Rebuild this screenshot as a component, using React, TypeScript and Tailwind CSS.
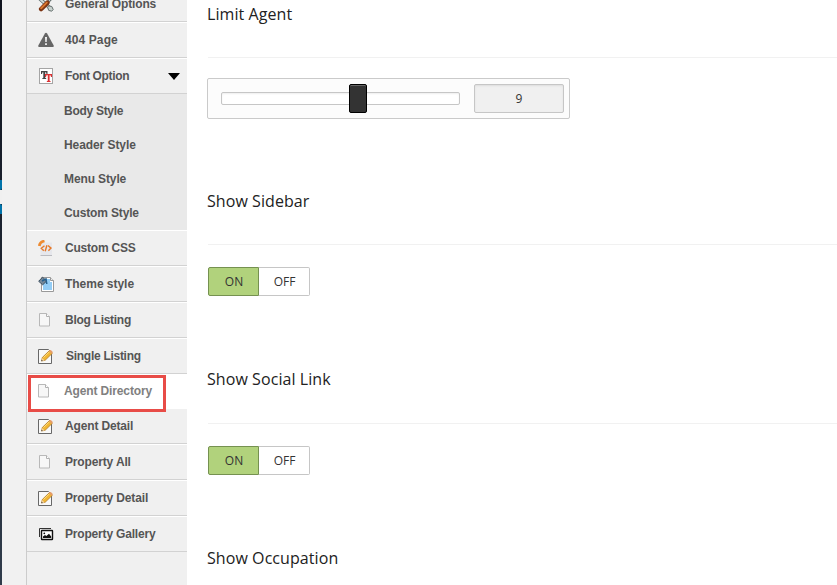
import type { ReactNode } from "react";

const Tools = () => (
  <svg width="16" height="16" viewBox="0 0 16 16" fill="none">
    <path d="M2.500 3.500l10 9" stroke="#647273" strokeWidth="3.600" strokeLinecap="round" />
    <path d="M2.500 3.500l10 9" stroke="#d4dcd9" strokeWidth="1.800" strokeLinecap="round" />
    <path d="M10.500 9.800l3.300.7 1.400 3-1.500 1.700-3-.8-1-3z" fill="#c9d2ce" stroke="#66706f" />
    <path d="M14.500 1.500L9.500 6.500" stroke="#66706f" strokeWidth="2.600" />
    <path d="M14.500 1.500L9.500 6.500" stroke="#bcc6c3" strokeWidth="1" />
    <path d="M9.300 6.800L3.200 13" stroke="#7c3312" strokeWidth="4.600" strokeLinecap="round" />
    <path d="M8.800 6.600L3.200 12.200" stroke="#d9762f" strokeWidth="2" strokeLinecap="round" />
  </svg>
);

const Warning = () => (
  <svg width="16" height="16" viewBox="0 0 16 16">
    <path d="M8 .8Q8.700.8 9.100 1.500L15.700 13.600Q16.100 15 14.900 15H1.100Q-.1 15 .3 13.600L6.900 1.500Q7.300.8 8 .8z" fill="#666" />
    <path d="M7 5h2l-.3 5H7.300zM7.100 11.200h1.800V13H7.100z" fill="#f3f3f3" />
  </svg>
);

const FontIcon = () => (
  <svg width="16" height="16" viewBox="0 0 16 16">
    <rect x="1.500" y=".5" width="13" height="15" fill="#fff" stroke="#a5a5a5" />
    <path d="M3 3h6.500v3h-1L8 4.200H7.200v5.600l1 .4V11H4.300v-.8l1-.4V4.200H4.500L4 6H3z" fill="#454545" />
    <path d="M7 6h7v3h-1l-.5-1.800h-.9v5.600l1 .4v.8H8.800v-.8l1-.4V7.200H8.500L8 9H7z" fill="#db2f32" />
  </svg>
);

const CssIcon = () => (
  <svg width="16" height="16" viewBox="0 0 16 16" fill="none">
    <path d="M4 2.500h10v13H2.500V7z" fill="#e6e7ec" />
    <path d="M2.500 15.500H14" stroke="#babbc0" />
    <path d="M1.300 6Q1.800 2 6.500 1" stroke="#ed8b32" strokeWidth="2.800" />
    <path d="M6.500 5.800L3.300 8.300l2.500 2.400M10 5.500l3 2.600-2.600 2.700M8.900 5.200L7.200 11.200" stroke="#e77928" strokeWidth="1.400" />
  </svg>
);

const ThemeIcon = () => (
  <svg width="16" height="16" viewBox="0 0 16 16" fill="none">
    <path d="M3.500 1.500h9l3 3v11h-12z" fill="#fff" stroke="#999" />
    <path d="M5 3h7v3h2v8H5z" fill="#93cdf6" />
    <path d="M12.500 1.500v3h3" fill="#eee" stroke="#999" />
    <path d="M4.500 1.200l4.200 3.700-4 3.900L.7 5.300z" fill="#76899a" stroke="#3d5060" />
    <path d="M4 5l4-2 .8 5" stroke="#28618d" strokeWidth="1.500" />
  </svg>
);

const Page = () => (
  <svg width="16" height="16" viewBox="0 0 16 16" fill="none">
    <path d="M1.500 1.500h7l3 3v9.500h-10z" fill="#f7f7f7" stroke="#b8b8b8" />
    <path d="M8.500 1.500v3h3" fill="#fff" stroke="#b0b0b0" />
  </svg>
);

const Edit = () => (
  <svg width="16" height="16" viewBox="0 0 16 16" fill="none">
    <path d="M.5 1.500h10l3 3v11H.5z" fill="#f9f9f9" stroke="#686868" />
    <path d="M3.500 13l.8-3.500 7.200-7 2.800 2.800-7.200 7z" fill="#f1b634" stroke="#b47b25" strokeWidth=".8" />
    <path d="M5.500 9.500l6-5.800" stroke="#ffe083" />
    <path d="M10.800 3.100l1-1q.8-.5 1.600.3l1 1q.7.800.1 1.500l-.9.900z" fill="#e49c68" />
    <path d="M3.300 13.200l.8-3.200 2.500 2.400z" fill="#f3d3a0" />
    <path d="M3.300 13.200l.4-1.500 1.100 1.100z" fill="#333" />
  </svg>
);

const Gallery = () => (
  <svg width="16" height="16" viewBox="0 0 16 16" fill="none">
    <path d="M1.500 11V2.500H13" stroke="#333" />
    <rect x="3.500" y="4.500" width="11" height="9" rx=".5" fill="#fff" stroke="#111" strokeWidth="1.400" />
    <path d="M5 12V10.500l2-1.500 1.300 1L11 7.800l2.200 2.700V12z" fill="#111" />
    <circle cx="6.300" cy="7.300" r=".9" fill="#111" />
  </svg>
);

type RowProps = { icon: ReactNode; label: string; textClass?: string; className?: string; open?: boolean };

function Row({ icon, label, textClass = "tracking-[-0.15px]", className = "h-9 border-t border-t-white", open = false }: RowProps) {
  return (
    <li className={`flex shrink-0 items-center border-b border-b-[#d2d2d2] bg-[#f0f0f0] pl-[11px] ${className}`}>
      <span className="w-[27px]">{icon}</span>
      <span className={`leading-4 ${textClass}`}>{label}</span>
      {open && (
        <svg className="mr-[7px] ml-auto" width="12" height="7" viewBox="0 0 12 7">
          <path d="M0 0h12L6 7z" fill="#000" />
        </svg>
      )}
    </li>
  );
}

function Heading({ children, className = "" }: { children: string; className?: string }) {
  return <h3 className={`h-6 text-[16px] leading-6 tracking-[0.07px] whitespace-nowrap text-[#222] ${className}`}>{children}</h3>;
}

function Toggle() {
  return (
    <div className="ml-px flex h-[29px] w-[102px] text-[12px] leading-[27px] text-[#333]">
      <button className="w-[51px] rounded-l-[2px] border border-[#759150] bg-[#b1d27c] pl-px">ON</button>
      <button className="w-[51px] rounded-r-[2px] border border-l-0 border-[#c6c6c6] bg-white pl-px">OFF</button>
    </div>
  );
}

export default function App() {
  return (
    <div className="flex h-[585px] w-[837px] overflow-hidden bg-white font-['Liberation_Sans',Arial,sans-serif]">
      <div className="flex w-[2px] shrink-0 flex-col bg-linear-to-b from-[#10141f] to-[#303c4b]">
        <div className="mt-[180px] h-[10px] rounded-br-[2px] bg-[#0073aa]" />
        <div className="h-[14px] bg-[#f0f0f0]" />
        <div className="h-[10px] rounded-tr-[2px] bg-[#0073aa]" />
      </div>
      <div className="w-6 shrink-0 bg-[#f1f1f1]" />
      <aside className="relative w-[161px] shrink-0 border-l border-l-[#cccccc] bg-[#f0f0f0] text-[12px] font-bold text-[#555]">
        <ul className="-mt-[14px] flex flex-col">
          <Row icon={<Tools />} label="General Options" />
          <Row icon={<Warning />} label="404 Page" textClass="tracking-[0.1px]" />
          <Row icon={<FontIcon />} label="Font Option" textClass="tracking-[-0.35px]" open />
          <li className="bg-[#e9e9e9]">
            <ul>
              <li className="h-[34px] pl-[37px] leading-[34px] tracking-[-0.28px]">Body Style</li>
              <li className="h-[34px] pl-[37px] leading-[34px] tracking-[-0.08px]">Header Style</li>
              <li className="h-[34px] pl-[37px] leading-[34px] tracking-[-0.12px]">Menu Style</li>
              <li className="h-[34px] pl-[37px] leading-[34px] tracking-[-0.15px]">Custom Style</li>
            </ul>
          </li>
          <Row icon={<CssIcon />} label="Custom CSS" textClass="tracking-[-0.2px]" />
          <Row icon={<ThemeIcon />} label="Theme style" textClass="tracking-[-0.03px]" />
          <Row icon={<Page />} label="Blog Listing" textClass="tracking-[-0.28px]" />
          <Row icon={<Edit />} label="Single Listing" textClass="pl-px tracking-[-0.28px]" />
          <li className="flex h-[35px] items-center bg-white pb-0.5 pl-[10px] text-[#808080]">
            <span className="w-[27px]"><Page /></span>
            <span className="leading-4 tracking-[-0.13px]">Agent Directory</span>
          </li>
          <Row icon={<Edit />} label="Agent Detail" className="h-[35px]" />
          <Row icon={<Page />} label="Property All" />
          <Row icon={<Edit />} label="Property Detail" />
          <Row icon={<Gallery />} label="Property Gallery" textClass="tracking-[-0.18px]" />
        </ul>
        <div className="absolute top-[375px] left-px h-[37px] w-[138px] border-3 border-[#e84c47]" />
      </aside>
      <main className="flex flex-1 flex-col pl-5 font-['Open_Sans','Noto_Sans',sans-serif]">
        <section className="h-[189px] pt-0.5">
          <Heading>Limit Agent</Heading>
          <hr className="mt-[31px] ml-px border-[#f1f1f1]" />
          <div className="mt-5 flex h-[41px] w-[363px] items-center rounded-[2px] border border-[#cacaca] bg-[#fcfcfc] pl-[13px]">
            <div className="flex h-[13px] w-[239px] items-center rounded-[2px] border border-[#c6c6c6] bg-white pl-[127px] shadow-[inset_0_1px_2px_#eeeeee]">
              <div className="h-[29px] w-[18px] shrink-0 rounded-[2px] border border-black bg-[#333] shadow-[inset_0_1px_0_#666]" />
            </div>
            <div className="ml-[14px] h-[29px] w-[90px] rounded-[2px] border border-[#c6c6c6] bg-[#f0f0f0] text-center text-[12px] leading-[27px] text-[#333] shadow-[inset_0_1px_2px_#dddddd]">9</div>
          </div>
        </section>
        <section className="h-[178px]">
          <Heading>Show Sidebar</Heading>
          <hr className="mt-[31px] mb-[22px] ml-px border-[#f1f1f1]" />
          <Toggle />
        </section>
        <section className="h-[179px]">
          <Heading>Show Social Link</Heading>
          <hr className="mt-8 mb-[22px] ml-px border-[#f1f1f1]" />
          <Toggle />
        </section>
        <section>
          <Heading>Show Occupation</Heading>
        </section>
      </main>
    </div>
  );
}
